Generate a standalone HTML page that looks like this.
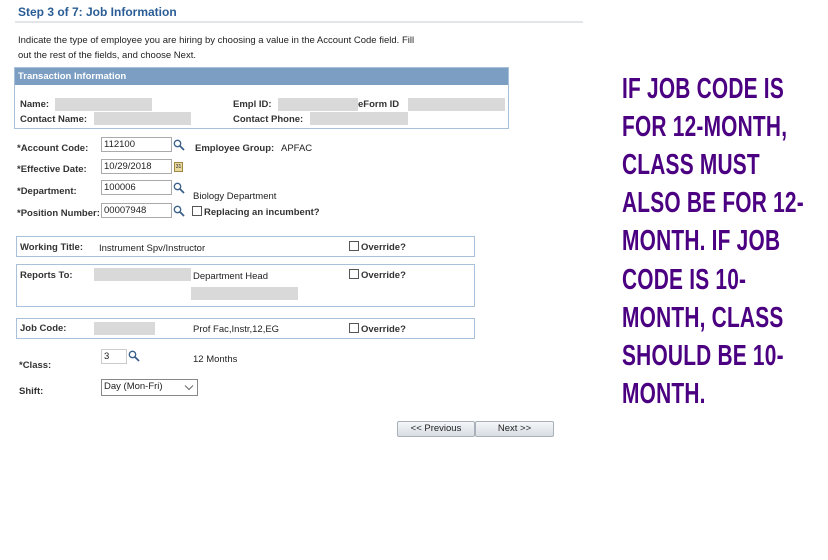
<!DOCTYPE html>
<html><head><meta charset="utf-8"><style>
*{margin:0;padding:0;box-sizing:border-box}
body{width:828px;height:560px;background:#fff;position:relative;overflow:hidden;font-family:"Liberation Sans",Arial,sans-serif;font-size:9.5px;color:#222}
.a{position:absolute;white-space:nowrap}
.b{font-weight:bold;color:#333}
.g{position:absolute;background:#d9d9d9}
.in{position:absolute;border:1px solid #aaa;background:#fff;height:15px;font-size:9.5px;padding:1px 2px;color:#222}
.box{position:absolute;border:1px solid #a9c0db}
.cb{display:inline-block;width:10px;height:10px;border:1px solid #555;vertical-align:-1px;margin-right:2px;background:#fff}
.mag{position:absolute;width:12px;height:12px}
.big{position:absolute;left:622px;font-family:"Liberation Sans Narrow","Liberation Sans",sans-serif;font-weight:bold;font-size:29px;color:#4b0082;white-space:nowrap;transform:scaleX(0.72);transform-origin:left;letter-spacing:0.3px}
.btn{position:absolute;top:421px;height:16px;border:1px solid #a8b0ba;border-radius:2px;background:linear-gradient(#f4f6f8,#d8dde3);font-size:9.5px;text-align:center;line-height:14px;color:#222}
</style></head><body>
<div class="a" style="left:18px;top:5px;font-size:12px;font-weight:bold;color:#2a5d95">Step 3 of 7: Job Information</div>
<div class="a" style="left:15px;top:21px;width:568px;height:2px;background:#e2e5ea"></div>
<div class="a" style="left:18px;top:33px;line-height:15px">Indicate the type of employee you are hiring by choosing a value in the Account Code field. Fill<br>out the rest of the fields, and choose Next.</div>

<div class="box" style="left:14px;top:67px;width:495px;height:62px"></div>
<div class="a" style="left:15px;top:68px;width:493px;height:17px;background:#7c9ec2;color:#fff;font-weight:bold;padding:3px 3px;font-size:9.5px">Transaction Information</div>
<div class="a b" style="left:20px;top:99px">Name:</div>
<div class="a b" style="left:20px;top:114px">Contact Name:</div>
<div class="g" style="left:55px;top:98px;width:97px;height:13px"></div>
<div class="g" style="left:94px;top:112px;width:97px;height:13px"></div>
<div class="a b" style="left:233px;top:99px">Empl ID:</div>
<div class="a b" style="left:233px;top:114px">Contact Phone:</div>
<div class="g" style="left:278px;top:98px;width:80px;height:13px"></div>
<div class="a" style="left:358px;top:99px;font-weight:bold;color:#333">eForm ID</div>
<div class="g" style="left:408px;top:98px;width:97px;height:13px"></div>
<div class="g" style="left:310px;top:112px;width:98px;height:13px"></div>

<div class="a b" style="left:17px;top:143px">*Account Code:</div>
<div class="a b" style="left:17px;top:164px">*Effective Date:</div>
<div class="a b" style="left:17px;top:186px">*Department:</div>
<div class="a b" style="left:17px;top:208px">*Position Number:</div>
<div class="in" style="left:101px;top:137px;width:71px">112100</div>
<div class="in" style="left:101px;top:159px;width:71px">10/29/2018</div>
<div class="in" style="left:101px;top:180px;width:71px">100006</div>
<div class="in" style="left:101px;top:203px;width:71px">00007948</div>
<svg class="mag" style="left:173px;top:139px" viewBox="0 0 12 12"><circle cx="4.5" cy="4.5" r="3.2" fill="#fff" stroke="#3a5f8a" stroke-width="1.3"/><path d="M7 7l4 4" stroke="#3a5f8a" stroke-width="1.8"/></svg>
<svg class="mag" style="left:173px;top:182px" viewBox="0 0 12 12"><circle cx="4.5" cy="4.5" r="3.2" fill="#fff" stroke="#3a5f8a" stroke-width="1.3"/><path d="M7 7l4 4" stroke="#3a5f8a" stroke-width="1.8"/></svg>
<svg class="mag" style="left:173px;top:205px" viewBox="0 0 12 12"><circle cx="4.5" cy="4.5" r="3.2" fill="#fff" stroke="#3a5f8a" stroke-width="1.3"/><path d="M7 7l4 4" stroke="#3a5f8a" stroke-width="1.8"/></svg>
<div class="a" style="left:174px;top:162px;width:9px;height:10px;background:#e8d9a0;border:1px solid #a08840;font-size:5px;text-align:center;line-height:8px">31</div>
<div class="a b" style="left:195px;top:143px">Employee Group:</div>
<div class="a" style="left:281px;top:143px">APFAC</div>
<div class="a" style="left:193px;top:191px">Biology Department</div>
<div class="a b" style="left:192px;top:206px"><span class="cb"></span>Replacing an incumbent?</div>

<div class="box" style="left:16px;top:236px;width:459px;height:21px"></div>
<div class="a b" style="left:20px;top:242px">Working Title:</div>
<div class="a" style="left:99px;top:243px">Instrument Spv/Instructor</div>
<div class="a b" style="left:349px;top:241px"><span class="cb"></span>Override?</div>

<div class="box" style="left:16px;top:264px;width:459px;height:43px"></div>
<div class="a b" style="left:20px;top:270px">Reports To:</div>
<div class="g" style="left:94px;top:268px;width:97px;height:13px"></div>
<div class="a" style="left:193px;top:271px">Department Head</div>
<div class="g" style="left:191px;top:287px;width:107px;height:13px"></div>
<div class="a b" style="left:349px;top:269px"><span class="cb"></span>Override?</div>

<div class="box" style="left:16px;top:318px;width:459px;height:21px"></div>
<div class="a b" style="left:20px;top:323px">Job Code:</div>
<div class="g" style="left:94px;top:322px;width:61px;height:13px"></div>
<div class="a" style="left:193px;top:324px">Prof Fac,Instr,12,EG</div>
<div class="a b" style="left:349px;top:323px"><span class="cb"></span>Override?</div>

<div class="a b" style="left:19px;top:360px">*Class:</div>
<div class="in" style="left:101px;top:349px;width:26px;border-color:#ccc">3</div>
<svg class="mag" style="left:128px;top:350px" viewBox="0 0 12 12"><circle cx="4.5" cy="4.5" r="3.2" fill="#fff" stroke="#3a5f8a" stroke-width="1.3"/><path d="M7 7l4 4" stroke="#3a5f8a" stroke-width="1.8"/></svg>
<div class="a" style="left:193px;top:354px">12 Months</div>
<div class="a b" style="left:19px;top:386px">Shift:</div>
<div class="in" style="left:101px;top:379px;width:97px;height:17px;border-color:#888">Day (Mon-Fri)</div>
<svg class="a" style="left:184px;top:384px" width="10" height="7" viewBox="0 0 10 7"><path d="M1 1.5l4 4 4-4" fill="none" stroke="#666" stroke-width="1"/></svg>

<div class="btn" style="left:397px;width:78px">&lt;&lt; Previous</div>
<div class="btn" style="left:475px;width:79px">Next &gt;&gt;</div>

<div class="big" style="top:73px">IF JOB CODE IS</div>
<div class="big" style="top:111px">FOR 12-MONTH,</div>
<div class="big" style="top:149px">CLASS MUST</div>
<div class="big" style="top:187px">ALSO BE FOR 12-</div>
<div class="big" style="top:225px">MONTH. IF JOB</div>
<div class="big" style="top:264px">CODE IS 10-</div>
<div class="big" style="top:302px">MONTH, CLASS</div>
<div class="big" style="top:340px">SHOULD BE 10-</div>
<div class="big" style="top:378px">MONTH.</div>
</body></html>
